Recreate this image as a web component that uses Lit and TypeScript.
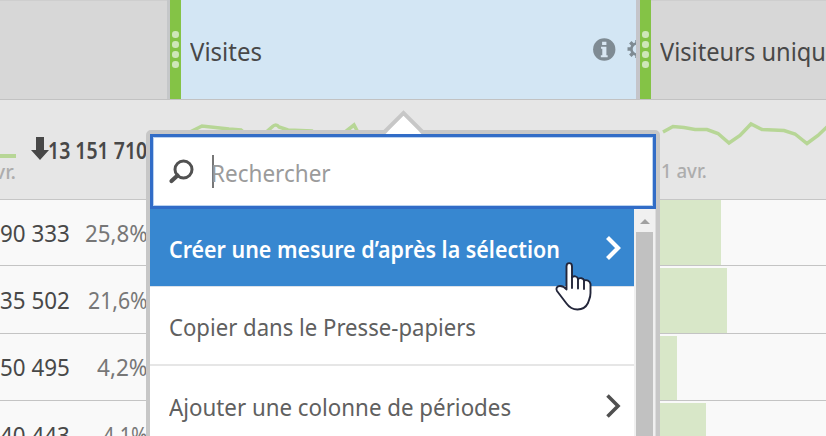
import { LitElement, html, svg, css } from "lit";
import { customElement, property, query, state } from "lit/decorators.js";
import { styleMap } from "lit/directives/style-map.js";

// Label condensed horizontally to occupy an exact width.
@customElement("fit-text")
class FitText extends LitElement {
  @property() text = "";
  @property({ type: Number }) width = 100;
  @state() scale = 1;
  @query("span") label!: HTMLSpanElement;
  static styles = css`
    :host { display: block; flex: none; white-space: nowrap; line-height: 32px; height: 32px; }
    .label { display: inline-block; transform-origin: 0 50%; }
  `;
  async firstUpdated() {
    this.measure();
    await document.fonts.ready;
    this.measure();
  }
  measure() {
    const natural = this.label.offsetWidth;
    if (natural) {
      this.scale = this.width / natural;
      this.style.width = `${this.width}px`;
    }
  }
  render() {
    return html`<span class="label" style=${styleMap({ transform: `scaleX(${this.scale})` })}>${this.text}</span>`;
  }
}

interface Row { value: string; valueWidth: number; percent: string; percentWidth: number; bar: number; }

const ROWS: Row[] = [
  { value: "90 333", valueWidth: 70, percent: "25,8%", percentWidth: 63, bar: 69.5 },
  { value: "35 502", valueWidth: 70, percent: "21,6%", percentWidth: 60, bar: 76 },
  { value: "50 495", valueWidth: 70, percent: "4,2%", percentWidth: 51, bar: 26 },
  { value: "40 443", valueWidth: 70, percent: "4,1%", percentWidth: 45, bar: 54.5 },
];

const ITEMS = [
  { label: "Créer une mesure d’après la sélection", width: 391, active: true, sub: true },
  { label: "Copier dans le Presse-papiers", width: 307, active: false, sub: false },
  { label: "Ajouter une colonne de périodes", width: 342, active: false, sub: true },
];

const chevron = svg`<path d="M2.500 2.500 L13 13 L2.500 23.500" fill="none" stroke="currentColor"/>`;

@customElement("app-root")
class AppRoot extends LitElement {
  static styles = css`
    :host {
      display: block; position: relative; width: 826px; height: 436px; overflow: hidden;
      background: #f9f9f9; color: #484848;
      font-family: "Noto Sans", "Open Sans", sans-serif; font-size: 23px;
    }
    * { box-sizing: border-box; }
    svg { display: block; flex: none; overflow: visible; }
    .head, .summary, .row { display: grid; grid-template-columns: 167px 473px 186px; }
    .head { height: 100px; background: #d7d7d7; border-bottom: 1px solid #c2c2c2; border-top: 1px solid #cecece; font-size: 25px; }
    .col { display: flex; align-items: center; overflow: hidden; padding-top: 2px; margin-top: -1px; height: 99px; }
    .col.selected { background: #d3e6f4; border-left: 3px solid #c5c7c9; border-right: 4px solid #c5c5ca; }
    .handle {
      flex: none; width: 11px; height: 99px; margin-top: -2px; background: #84c346;
      display: flex; flex-direction: column; gap: 3.5px; align-items: center; justify-content: center;
    }
    .dot { width: 6.4px; height: 6.4px; border-radius: 50%; background: #cfe7b9; }
    .name { margin-left: 9px; }
    .selected .name { margin-left: 8.5px; }
    .tools { margin-left: auto; display: flex; align-items: center; gap: 12px; width: 43.5px; overflow: hidden; color: #7f8b93; height: 30px; margin-top: -3px; }
    .summary { height: 100px; background: #e6e6e6; border-bottom: 1.5px solid #c6c6c6; }
    .total { display: flex; }
    .prev { width: 16px; height: 98px; display: flex; flex-direction: column; align-items: flex-end; padding-top: 54px; }
    .line { width: 16px; height: 3.5px; background: #b7d696; flex: none; }
    .date { font-size: 19px; font-weight: 500; color: #adadad; }
    .prev .date { margin-top: -2px; }
    .sum { display: flex; align-items: center; padding-left: 15px; height: 97px; font-weight: 600; }
    .sum fit-text { margin-top: 3px; margin-left: -1px; }
    .spark { padding: 20px 0 0 23px; }
    .uniq { padding: 20px 0 0 22px; }
    .uniq .date { margin-top: 5px; margin-left: -1px; }
    .row { height: 67.3px; border-bottom: 1.3px solid #c4c4c4; }
    .row.first { height: 66.3px; }
    .cells { display: grid; grid-template-columns: 70px 78px; align-items: center; justify-items: end; padding-top: 1px; }
    .first .cells { padding-top: 0; }
    .pct { color: #777; }
    .barcell { padding-left: 11px; padding-top: 2px; }
    .first .barcell { padding-top: 0; }
    .bar { height: 100%; margin-left: -3px; border-left: 3px solid transparent; background: #d8e7c8; background-clip: padding-box; }
    .popup {
      position: absolute; left: 146px; top: 130px; width: 514px; height: 330px;
      border: 4px solid #c7c7c7; border-radius: 5px; background: #fff; font-size: 24px;
    }
    .caret { position: absolute; left: 235px; top: -23px; }
    .search {
      position: relative; height: 75px; border: 3px solid #316cc7; box-shadow: inset 0 0 0 1px #bad2f0;
      display: flex; align-items: center; padding-left: 16px; background: #fff; color: #9b9b9b;
    }
    .beam { width: 1.5px; height: 33px; background: #777; margin-left: 18px; }
    .search fit-text { margin-top: 2px; margin-left: -2.5px; }
    .body { display: flex; }
    .items { width: 484px; }
    .item { height: 79.6px; display: flex; align-items: center; justify-content: space-between; padding: 4px 12px 0 19px; border-bottom: 2.5px solid #e6e6e6; color: #606060; }
    .item:first-child { height: 77.6px; }
    .item.active { background: #3787d0; color: #fff; font-weight: 600; border-bottom: 1.5px solid #dbe1e9; padding-top: 3px; }
    .chev { color: #505050; stroke-width: 3.6px; margin-top: -2px; }
    .active .chev { color: #fff; stroke-width: 4.200px; margin-top: -2px; }
    .scroll { flex: 1; height: 260px; background: #f0f0f0; border-right: 1px solid #ddd; display: flex; flex-direction: column; align-items: center; padding-top: 10px; }
    .thumb { width: 17px; height: 240px; margin-top: 8px; background: #c1c1c1; flex: none; }
    .pointer { position: absolute; left: 555px; top: 262px; }
  `;

  handle() {
    return html`<div class="handle">${[0, 1, 2, 3].map(() => html`<i class="dot"></i>`)}</div>`;
  }

  render() {
    return html`
      <div class="head">
        <div class="col"></div>
        <div class="col selected">
          ${this.handle()}
          <fit-text class="name" text="Visites" .width=${72}></fit-text>
          <div class="tools">
            <svg width="22.5" height="23" viewBox="0 0 23 23">
              <circle cx="11.5" cy="11.5" r="11.4" fill="currentColor"/>
              <path d="M9.300 3.500h4.400v3.500H9.300zM8.200 8.800h5.500v8.600H15v1.900H8v-1.900h1.500v-6.700H8.200z" fill="#d9e7f2"/>
            </svg>
            <svg width="20" height="20" viewBox="0 0 20 20">
              <circle cx="10" cy="10" r="5.6" fill="none" stroke="currentColor" stroke-width="2.6"/>
              <g stroke="currentColor" stroke-width="3.4">
                <path d="M10 4V1M10 16v3M4 10H0.500M16 10h3M5.800 5.800L3.300 3.300M14.200 5.800l2.300-2.300M5.800 14.200l-2.500 2.500M14.200 14.200l2.300 2.300"/>
              </g>
            </svg>
          </div>
        </div>
        <div class="col">
          ${this.handle()}
          <fit-text class="name" text="Visiteurs uniques" .width=${191}></fit-text>
        </div>
      </div>

      <div class="summary">
        <div class="total">
          <div class="prev">
            <div class="line"></div>
            <fit-text class="date" text="avr." .width=${33}></fit-text>
          </div>
          <div class="sum">
            <svg width="18" height="23" viewBox="0 0 18 23"><path d="M5 0h8v13h5L9 23 0 13h5z" fill="#484848"/></svg>
            <fit-text text="13 151 710" .width=${99}></fit-text>
          </div>
        </div>
        <div class="spark">
          <svg width="180" height="30" viewBox="0 0 180 30" fill="none" stroke="#b7d696" stroke-width="3.5">
            <path d="M0 12L12 6l27 3 12 1 14 12 17-15q4-4 7 0l9 3 24 1 10 8 18-3 14-11 8 15"/>
          </svg>
        </div>
        <div class="uniq">
          <svg width="170" height="30" viewBox="0 0 170 30" fill="none" stroke="#b7d696" stroke-width="3.5">
            <path d="M1 12L11 6.500 22 7.500 33 9.500H45L56 13.500 67 23 78 15.500 89 4 100 9.500 122 10.500 133 14 145 23.500 156 15.500 168 4"/>
          </svg>
          <fit-text class="date" text="1 avr." .width=${46}></fit-text>
        </div>
      </div>

      ${ROWS.map((r, i) => html`
        <div class="row ${i === 0 ? "first" : ""}">
          <div class="cells">
            <fit-text text=${r.value} .width=${r.valueWidth}></fit-text>
            <fit-text class="pct" text=${r.percent} .width=${r.percentWidth}></fit-text>
          </div>
          <div></div>
          <div class="barcell"><div class="bar" style=${styleMap({ width: `${r.bar + 3}px` })}></div></div>
        </div>`)}

      <div class="popup">
        <svg class="caret" width="40" height="24" viewBox="0 0 40 24">
          <path d="M0 20.500L18.500 2 37 20.500" fill="#fff" stroke="#c7c7c7" stroke-width="4"/>
          <path d="M0.500 23L18.500 5 36.500 23z" fill="#fff"/>
        </svg>
        <div class="search">
          <svg width="25" height="24" viewBox="0 0 25 24" fill="none" stroke="#515151">
            <circle cx="14.500" cy="9.500" r="8.500" stroke-width="3"/>
            <path d="M8.500 15.500L2.500 21" stroke-width="4.200" stroke-linecap="round"/>
          </svg>
          <div class="beam"></div>
          <fit-text text="Rechercher" .width=${120}></fit-text>
        </div>
        <div class="body">
          <div class="items">
            ${ITEMS.map((it) => html`
              <div class="item ${it.active ? "active" : ""}">
                <fit-text text=${it.label} .width=${it.width}></fit-text>
                ${it.sub ? html`<svg class="chev" width="17" height="26" viewBox="0 0 17 26">${chevron}</svg>` : ""}
              </div>`)}
          </div>
          <div class="scroll">
            <svg width="10" height="5" viewBox="0 0 10 5"><path d="M0 5L5 0l5 5z" fill="#a0a0a0"/></svg>
            <div class="thumb"></div>
          </div>
        </div>
      </div>

      <svg class="pointer" width="37" height="49" viewBox="0 0 37 49">
        <path d="M11.500 27.500V4.500C11.500 0 17 0 17 4.500V15.500C18.500 13.500 22.500 14 23 17 25 15.500 28.500 16 29 18.500 31.500 17.500 35 18.500 35.500 22V31C35.500 36 34 37.500 33 41 31 45 27 47.500 22.500 47.500 17 47.500 14 45 11.500 41.500L2 29C0.500 26.500 2 24 5 24 8 24 10 25.500 11.500 27.500Z" fill="#fff" stroke="#23263a" stroke-width="1.9" stroke-linejoin="round"/>
        <path d="M17 15v11M23 17v9.500M29 18.500v8.500" stroke="#23263a" stroke-width="1.9" stroke-linecap="round"/>
      </svg>
    `;
  }
}
